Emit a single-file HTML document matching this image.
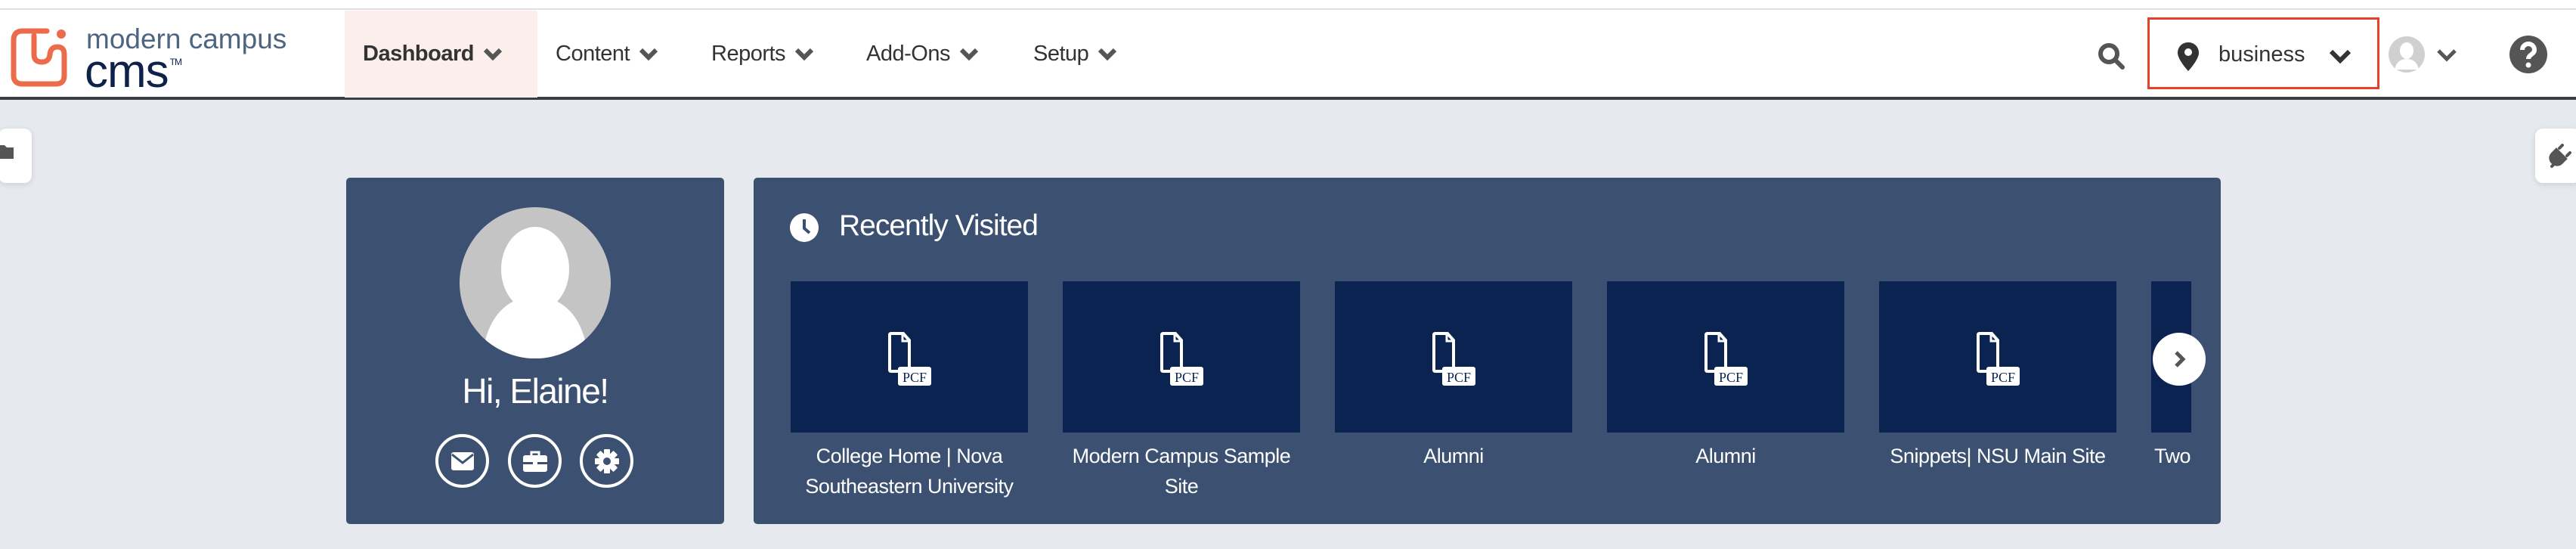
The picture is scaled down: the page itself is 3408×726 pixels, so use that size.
<!DOCTYPE html>
<html><head><meta charset="utf-8"><style>
*{box-sizing:border-box;margin:0;padding:0}
body{width:3408px;height:726px;overflow:hidden;background:#e6e9ee;font-family:"Liberation Sans",Arial,sans-serif;position:relative}
.top{position:absolute;left:0;top:0;width:3408px;height:13px;background:#fff;border-bottom:2px solid #e0e0e0}
.nav{position:absolute;left:0;top:13px;width:3408px;height:119px;background:#fff;border-bottom:4px solid #3a3d42}
.abs{position:absolute}
.mi{position:absolute;top:0;height:117px;line-height:117px;font-size:29px;color:#333;letter-spacing:-0.5px}
.mi svg{vertical-align:middle;margin-left:12px}
.card{position:absolute;top:235px;height:458px;background:#3c5172;border-radius:5px}
.tile{position:absolute;top:137px;width:314px;height:200px;background:#0b2350}
.lbl{position:absolute;top:348px;width:314px;text-align:center;color:#fff;font-size:27px;line-height:40px;letter-spacing:-0.5px}
.ic{position:absolute;top:339px;width:71px;height:71px;border:4px solid #fff;border-radius:50%}
.ic svg{position:absolute;left:50%;top:50%;transform:translate(-50%,-50%)}
.tab{position:absolute;top:170px;width:44px;height:72px;background:#fff;border-radius:10px;box-shadow:0 2px 8px rgba(0,0,0,.12)}
</style></head><body>
<div class="top"></div>
<div class="nav">
  <svg class="abs" style="left:0;top:-13px" width="100" height="130" viewBox="0 0 100 130">
    <path d="M62 41H30Q18 41 18 53V100Q18 111 30 111H74Q85 111 85 100V72Q85 62 76 62Q67 62 66 72Q65 82 55 82Q45 82 45 72V47" fill="none" stroke="#ec6b4a" stroke-width="7" stroke-linecap="round"/>
    <circle cx="81" cy="45" r="6" fill="#ec6b4a"/>
  </svg>
  <div class="abs" style="left:114px;top:18px;font-size:37px;color:#4f6480;letter-spacing:0px;font-weight:300">modern campus</div>
  <div class="abs" style="left:112px;top:46px;font-size:62px;color:#0e2149;letter-spacing:-1px">cms<span style="font-size:12px;vertical-align:top;position:relative;top:16px;margin-left:2px">TM</span></div>
  <div class="abs" style="left:456px;top:1px;width:255px;height:115px;background:#fcefeb"></div>
  <div class="mi" style="left:480px;font-weight:bold">Dashboard<svg width="26" height="20" viewBox="0 0 26 20"><path d="M3 4l10 10 10-10" fill="none" stroke="#555" stroke-width="6"/></svg></div>
  <div class="mi" style="left:735px">Content<svg width="26" height="20" viewBox="0 0 26 20"><path d="M3 4l10 10 10-10" fill="none" stroke="#555" stroke-width="6"/></svg></div>
  <div class="mi" style="left:941px">Reports<svg width="26" height="20" viewBox="0 0 26 20"><path d="M3 4l10 10 10-10" fill="none" stroke="#555" stroke-width="6"/></svg></div>
  <div class="mi" style="left:1146px">Add-Ons<svg width="26" height="20" viewBox="0 0 26 20"><path d="M3 4l10 10 10-10" fill="none" stroke="#555" stroke-width="6"/></svg></div>
  <div class="mi" style="left:1367px">Setup<svg width="26" height="20" viewBox="0 0 26 20"><path d="M3 4l10 10 10-10" fill="none" stroke="#555" stroke-width="6"/></svg></div>
  <svg class="abs" style="left:2774px;top:42px" width="40" height="40" viewBox="0 0 40 40"><circle cx="16" cy="16" r="11" fill="none" stroke="#555" stroke-width="6"/><path d="M24 24l10 10" stroke="#555" stroke-width="6" stroke-linecap="round"/></svg>
  <div class="abs" style="left:2841px;top:10px;width:307px;height:95px;border:3px solid #e5402a"></div>
  <svg class="abs" style="left:2880px;top:42px" width="30" height="40" viewBox="0 0 30 40"><path d="M15 1C7 1 1 7 1 15c0 9 14 24 14 24s14-15 14-24C29 7 23 1 15 1z" fill="#333"/><circle cx="15" cy="14" r="5" fill="#fff"/></svg>
  <div class="abs" style="left:2935px;top:38px;font-size:29px;color:#333;line-height:42px">business</div>
  <svg class="abs" style="left:3080px;top:50px" width="32" height="24" viewBox="0 0 32 24"><path d="M4 5l12 12 12-12" fill="none" stroke="#333" stroke-width="6"/></svg>
  <svg class="abs" style="left:3160px;top:35px" width="48" height="48" viewBox="0 0 48 48"><circle cx="24" cy="24" r="24" fill="#d0d0d0"/><ellipse cx="24" cy="19" rx="9" ry="11" fill="#fff"/><path d="M8 44c2-10 8-14 16-14s14 4 16 14z" fill="#fff"/></svg>
  <svg class="abs" style="left:3222px;top:50px" width="30" height="22" viewBox="0 0 30 22"><path d="M4 4l11 11 11-11" fill="none" stroke="#555" stroke-width="5"/></svg>
  <svg class="abs" style="left:3320px;top:34px" width="50" height="50" viewBox="0 0 50 50"><circle cx="25" cy="25" r="25" fill="#555"/><path d="M17 19c0-5 4-8 8-8s8 3 8 8c0 6-8 6-8 12" fill="none" stroke="#fff" stroke-width="6"/><circle cx="25" cy="39" r="3.5" fill="#fff"/></svg>
</div>
<div class="tab" style="left:-2px"><svg class="abs" style="left:0;top:20px" width="22" height="22" viewBox="0 0 22 22"><path d="M0 2h8l3 3h9v15H0z" fill="#555"/></svg></div>
<div class="tab" style="left:3354px;width:60px"><svg class="abs" style="left:14px;top:20px" width="34" height="34" viewBox="0 0 34 34"><path d="M8 30l5-5M14 8l12 12-5 5c-4 4-9 3-12 0s-4-8 0-12z M18 6l4-4M28 16l4-4" fill="#555" stroke="#555" stroke-width="4" stroke-linecap="round"/></svg></div>
<div class="card" style="left:458px;width:500px">
  <svg class="abs" style="left:150px;top:39px" width="200" height="200" viewBox="0 0 200 200"><defs><clipPath id="c"><circle cx="100" cy="100" r="100"/></clipPath></defs><circle cx="100" cy="100" r="100" fill="#c4c4c4"/><g clip-path="url(#c)" fill="#fff"><ellipse cx="100" cy="82" rx="45" ry="56"/><path d="M30 200c4-50 30-82 70-82s66 32 70 82z"/></g></svg>
  <div class="abs" style="left:0;top:255px;width:500px;text-align:center;color:#fff;font-size:46px;font-weight:300;letter-spacing:-1.5px">Hi, Elaine!</div>
  <div class="ic" style="left:118px"><svg width="30" height="24" viewBox="0 0 30 24"><rect x="0" y="0" width="30" height="24" rx="3" fill="#fff"/><path d="M1 3l14 11 14-11" fill="none" stroke="#3c5172" stroke-width="3"/></svg></div>
  <div class="ic" style="left:214px"><svg width="32" height="28" viewBox="0 0 32 28"><path d="M11 6V2h10v4" fill="none" stroke="#fff" stroke-width="3"/><rect x="0" y="6" width="32" height="22" rx="3" fill="#fff"/><rect x="0" y="15" width="32" height="3" fill="#3c5172"/><rect x="13" y="13" width="6" height="7" fill="#fff"/></svg></div>
  <div class="ic" style="left:309px"><svg width="32" height="32" viewBox="0 0 32 32"><g fill="#fff"><circle cx="16" cy="16" r="11"/><rect x="12" y="0" width="8" height="32" rx="1"/><rect x="0" y="12" width="32" height="8" rx="1"/><rect x="12" y="0" width="8" height="32" rx="1" transform="rotate(45 16 16)"/><rect x="12" y="0" width="8" height="32" rx="1" transform="rotate(-45 16 16)"/></g><circle cx="16" cy="16" r="5" fill="#3c5172"/></svg></div>
</div>
<div class="card" style="left:997px;width:1941px;overflow:hidden">
  <svg class="abs" style="left:48px;top:47px" width="38" height="38" viewBox="0 0 38 38"><circle cx="19" cy="19" r="19" fill="#fff"/><path d="M19 8v12l7 6" fill="none" stroke="#3c5172" stroke-width="4"/></svg>
  <div class="abs" style="left:113px;top:42px;font-size:39px;color:#fff;letter-spacing:-1px">Recently Visited</div>
  <div class="abs" style="left:49px;top:0;width:1853px;height:458px;overflow:hidden">
    <div class="tile" style="left:0"></div><div class="tile" style="left:360px"></div><div class="tile" style="left:720px"></div><div class="tile" style="left:1080px"></div><div class="tile" style="left:1440px"></div><div class="tile" style="left:1800px"></div>
    <div class="lbl" style="left:0">College Home | Nova Southeastern University</div>
    <div class="lbl" style="left:360px">Modern Campus Sample Site</div>
    <div class="lbl" style="left:720px">Alumni</div>
    <div class="lbl" style="left:1080px">Alumni</div>
    <div class="lbl" style="left:1440px">Snippets| NSU Main Site</div>
    <div class="lbl" style="left:1800px;text-align:left;padding-left:4px">Two</div>
  </div>
</div>
<svg class="abs" style="left:0;top:0;pointer-events:none" width="3408" height="726">
  <defs><g id="pcf"><path d="M2 4Q2 2 4 2H20L28 11V50Q28 52 26 52H4Q2 52 2 50Z" fill="none" stroke="#fff" stroke-width="4"/><path d="M19 2V12H28" fill="none" stroke="#fff" stroke-width="3"/><rect x="13" y="46" width="44" height="25" rx="3" fill="#fff"/></g></defs>
  <g transform="translate(1175,439)"><use href="#pcf"/><text x="35" y="66" font-family="Liberation Serif,serif" font-size="18" fill="#0b2350" text-anchor="middle">PCF</text></g>
  <g transform="translate(1535,439)"><use href="#pcf"/><text x="35" y="66" font-family="Liberation Serif,serif" font-size="18" fill="#0b2350" text-anchor="middle">PCF</text></g>
  <g transform="translate(1895,439)"><use href="#pcf"/><text x="35" y="66" font-family="Liberation Serif,serif" font-size="18" fill="#0b2350" text-anchor="middle">PCF</text></g>
  <g transform="translate(2255,439)"><use href="#pcf"/><text x="35" y="66" font-family="Liberation Serif,serif" font-size="18" fill="#0b2350" text-anchor="middle">PCF</text></g>
  <g transform="translate(2615,439)"><use href="#pcf"/><text x="35" y="66" font-family="Liberation Serif,serif" font-size="18" fill="#0b2350" text-anchor="middle">PCF</text></g>
  <circle cx="2883" cy="475" r="35" fill="#fff"/>
  <path d="M2879 466l9 9-9 9" fill="none" stroke="#555" stroke-width="5"/>
</svg>
</body></html>
